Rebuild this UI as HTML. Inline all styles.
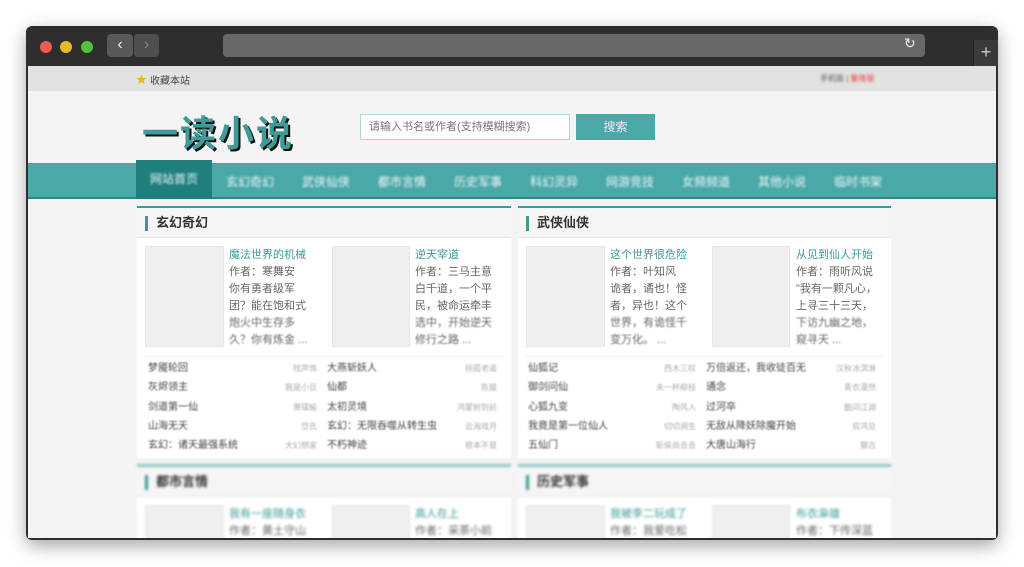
<!DOCTYPE html>
<html><head><meta charset="utf-8"><style>
*{margin:0;padding:0;box-sizing:border-box}
body{width:1024px;height:567px;background:#fff;position:relative;overflow:hidden;font-family:"Liberation Sans","Noto Sans CJK SC",sans-serif}
.a{position:absolute}
.win{left:26px;top:26px;width:972px;height:514px;border-radius:6px;background:#2e2e2e;box-shadow:0 6px 18px rgba(0,0,0,.35);overflow:hidden}
.page{left:2px;top:40px;width:968px;height:472px;background:#f4f4f4;overflow:hidden}
.b{filter:blur(.9px)}
.bb{filter:blur(1.3px)}
.panel{background:#fff;border-top:2px solid #3c9997}
.ph{height:30px;background:#f5f5f5;border-bottom:1px solid #e8e8e8;font-size:13px;font-weight:bold;color:#333;line-height:30px;padding-left:19px;position:relative}
.ph:before{content:"";position:absolute;left:8px;top:8px;width:3px;height:15px;background:#3c9997}
.cov{background:#efefef;border:1px solid #e6e6e6}
.bt{font-size:11px;color:#3a9a99;line-height:17px}
.bd{font-size:11px;color:#666;line-height:17px;width:82px;overflow:hidden}
.li{font-size:10px;color:#444;line-height:19.3px}
.au{font-size:8px;color:#aaa;line-height:19.3px;text-align:right}
.nv span{display:inline-block;width:76px;text-align:center}
</style></head><body>
<div class="a win">
 <div class="a" style="left:14px;top:15px;width:12px;height:12px;border-radius:50%;background:#f25a54"></div>
 <div class="a" style="left:34px;top:15px;width:12px;height:12px;border-radius:50%;background:#e5bb2a"></div>
 <div class="a" style="left:55px;top:15px;width:12px;height:12px;border-radius:50%;background:#4fc536"></div>
 <div class="a" style="left:81px;top:8px;width:26px;height:23px;border-radius:4px;background:#595959;color:#eee;font-size:16px;text-align:center;line-height:22px">&#8249;</div>
 <div class="a" style="left:108px;top:8px;width:25px;height:23px;border-radius:4px;background:#4f4f4f;color:#888;font-size:16px;text-align:center;line-height:22px">&#8250;</div>
 <div class="a" style="left:197px;top:8px;width:702px;height:23px;border-radius:4px;background:#686868"></div>
 <div class="a" style="left:878px;top:9px;color:#eee;font-size:14px">&#8635;</div>
 <div class="a" style="left:947px;top:14px;width:25px;height:26px;background:#3a3a3a;border-left:1px solid #222;color:#ccc;font-size:18px;text-align:center;line-height:24px">+</div>
 <div class="a page">
  <div class="a" style="left:0;top:0;width:968px;height:25px;background:#e2e2e2"></div>
  <div class="a" style="left:108px;top:5px;font-size:11px;color:#f0b400">&#9733;</div>
  <div class="a" style="left:122px;top:6px;font-size:10px;color:#444">收藏本站</div>
  <div class="a bb" style="left:792px;top:7px;font-size:8px;color:#555">手机版 | <span style="color:#e33">繁体版</span></div>
  <div class="a" style="left:114px;top:43px;font-size:36px;font-weight:bold;color:#3f9b98;letter-spacing:2px;text-shadow:2px 2px 0 #111;line-height:44px;font-family:'Noto Sans CJK SC',sans-serif">一读小说</div>
  <div class="a" style="left:332px;top:48px;width:210px;height:26px;background:#fff;border:1px solid #a9d8d6;font-size:11px;color:#777;line-height:24px;padding-left:8px">请输入书名或作者(支持模糊搜索)</div>
  <div class="a" style="left:548px;top:48px;width:79px;height:26px;background:#4aa8a7;color:#eef;font-size:12px;line-height:26px;text-align:center">搜索</div>
  <div class="a" style="left:0;top:97px;width:968px;height:36px;background:#4aa8a7;border-bottom:2px solid #2f8684"></div>
  <div class="a" style="left:108px;top:94px;width:76px;height:39px;background:#1f7f7d"></div>
  <div class="a bb nv" style="left:108px;top:107px;width:860px;font-size:12px;color:#f2fafa;white-space:nowrap;filter:blur(1px)">
   <span style="margin-top:-3px;vertical-align:top">网站首页</span><span>玄幻奇幻</span><span>武侠仙侠</span><span>都市言情</span><span>历史军事</span><span>科幻灵异</span><span>网游竞技</span><span>女频频道</span><span>其他小说</span><span>临时书架</span>
  </div>

  <!-- panel 1 -->
  <div class="a panel" style="left:109px;top:140px;width:374px;height:252px">
   <div class="ph">玄幻奇幻</div>
   <div class="a cov" style="left:8px;top:38px;width:79px;height:101px"></div>
   <div class="a" style="left:92px;top:39px"><div class="bt">魔法世界的机械</div><div class="bd">作者：寒舞安<br>你有勇者级军<br>团？能在饱和式<span class="b" style="display:block">炮火中生存多<br>久？你有炼金 ...</span></div></div>
   <div class="a cov" style="left:195px;top:38px;width:78px;height:101px"></div>
   <div class="a" style="left:278px;top:39px"><div class="bt">逆天宰道</div><div class="bd">作者：三马主意<br>白千道，一个平<br>民，被命运牵丰<span class="b" style="display:block">选中，开始逆天<br>修行之路 ...</span></div></div>
   <div class="a" style="left:8px;top:148px;width:358px;border-top:1px solid #f0f0f0"></div>
   <div class="a b" style="left:11px;top:151px;width:160px"><div class="li">梦魇轮回<br>灰烬领主<br>剑道第一仙<br>山海无天<br>玄幻：诸天最强系统</div></div>
   <div class="a b" style="left:110px;top:151px;width:70px"><div class="au">残声饰<br>我是小豆<br>萧瑾瑜<br>岱氏<br>大幻想家</div></div>
   <div class="a b" style="left:190px;top:151px;width:180px"><div class="li">大燕斩妖人<br>仙都<br>太初灵境<br>玄幻：无限吞噬从转生虫<br>不朽神迹</div></div>
   <div class="a b" style="left:290px;top:151px;width:70px"><div class="au">拐孤老道<br>陈猿<br>鸿蒙树到前<br>云海戏月<br>根本不是</div></div>
  </div>

  <!-- panel 2 -->
  <div class="a panel" style="left:490px;top:140px;width:373px;height:252px">
   <div class="ph">武侠仙侠</div>
   <div class="a cov" style="left:8px;top:38px;width:79px;height:101px"></div>
   <div class="a" style="left:92px;top:39px"><div class="bt">这个世界很危险</div><div class="bd">作者：叶知风<br>诡者，谲也！怪<br>者，异也！这个<span class="b" style="display:block">世界，有诡怪千<br>变万化。 ...</span></div></div>
   <div class="a cov" style="left:194px;top:38px;width:78px;height:101px"></div>
   <div class="a" style="left:278px;top:39px"><div class="bt">从见到仙人开始</div><div class="bd">作者：雨听风说<br>"我有一颗凡心，<br>上寻三十三天，<span class="b" style="display:block">下访九幽之地，<br>窥寻天 ...</span></div></div>
   <div class="a" style="left:8px;top:148px;width:358px;border-top:1px solid #f0f0f0"></div>
   <div class="a b" style="left:10px;top:151px;width:160px"><div class="li">仙狐记<br>御剑问仙<br>心狐九变<br>我竟是第一位仙人<br>五仙门</div></div>
   <div class="a b" style="left:108px;top:151px;width:70px"><div class="au">西木三叹<br>未一杯柳枝<br>陶风入<br>切切涧生<br>斩侯尚去去</div></div>
   <div class="a b" style="left:188px;top:151px;width:180px"><div class="li">万倍返还，我收徒百无<br>通念<br>过河卒<br>无敌从降妖除魔开始<br>大唐山海行</div></div>
   <div class="a b" style="left:288px;top:151px;width:70px"><div class="au">汉秋冰淇淋<br>青衣漫然<br>酷问江湖<br>双鸿旦<br>摄古</div></div>
  </div>

  <!-- row 2 -->
  <div class="a panel bb" style="left:109px;top:398px;width:374px;height:90px;border-top:3px solid #8cc7c5">
   <div class="ph">都市言情</div>
   <div class="a cov" style="left:8px;top:38px;width:79px;height:60px"></div>
   <div class="a" style="left:92px;top:39px"><div class="bt">我有一座随身衣</div><div class="bd">作者：黄土守山</div></div>
   <div class="a cov" style="left:195px;top:38px;width:78px;height:60px"></div>
   <div class="a" style="left:278px;top:39px"><div class="bt">高人在上</div><div class="bd">作者：采荼小前</div></div>
  </div>
  <div class="a panel bb" style="left:490px;top:398px;width:373px;height:90px;border-top:3px solid #8cc7c5">
   <div class="ph">历史军事</div>
   <div class="a cov" style="left:8px;top:38px;width:79px;height:60px"></div>
   <div class="a" style="left:92px;top:39px"><div class="bt">我被李二玩成了</div><div class="bd">作者：我爱吃松</div></div>
   <div class="a cov" style="left:194px;top:38px;width:78px;height:60px"></div>
   <div class="a" style="left:278px;top:39px"><div class="bt">布衣枭雄</div><div class="bd">作者：下传深蓝</div></div>
  </div>
 </div>
</div>
</body></html>
